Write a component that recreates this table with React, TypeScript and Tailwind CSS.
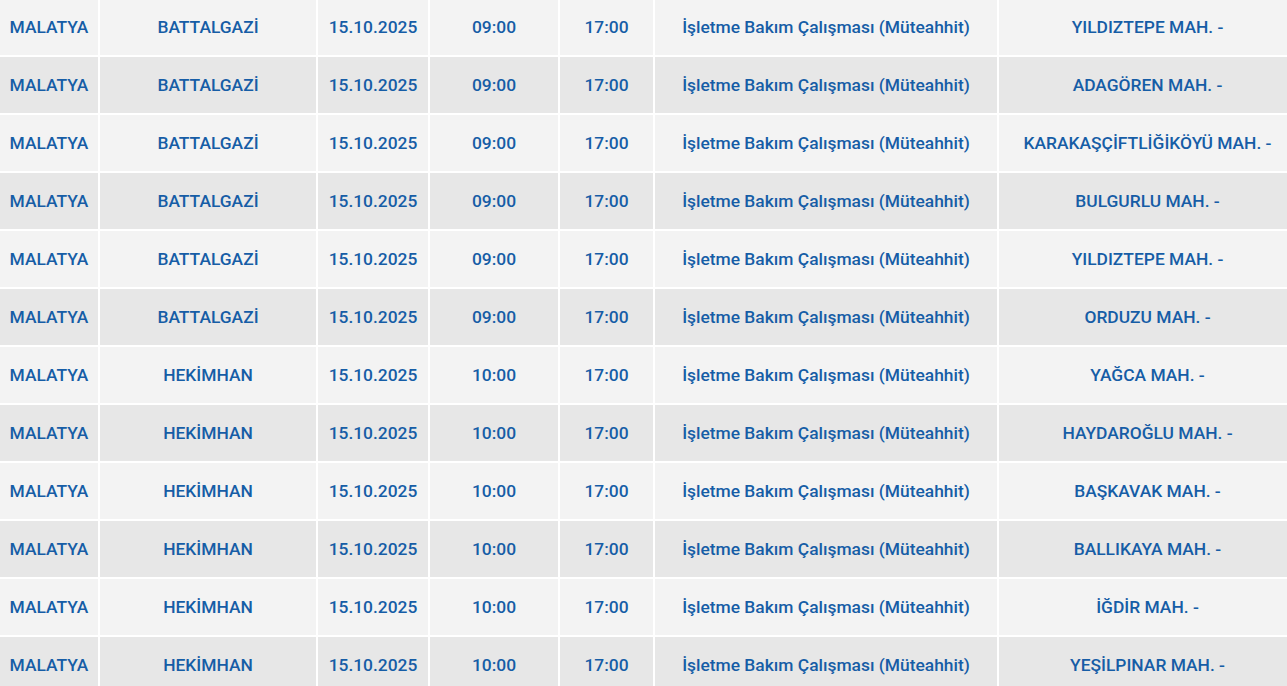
import React from "react";

const rows: [string, string, string][] = [
  ["BATTALGAZİ", "09:00", "YILDIZTEPE MAH. -"],
  ["BATTALGAZİ", "09:00", "ADAGÖREN MAH. -"],
  ["BATTALGAZİ", "09:00", "KARAKAŞÇİFTLİĞİKÖYÜ MAH. -"],
  ["BATTALGAZİ", "09:00", "BULGURLU MAH. -"],
  ["BATTALGAZİ", "09:00", "YILDIZTEPE MAH. -"],
  ["BATTALGAZİ", "09:00", "ORDUZU MAH. -"],
  ["HEKİMHAN", "10:00", "YAĞCA MAH. -"],
  ["HEKİMHAN", "10:00", "HAYDAROĞLU MAH. -"],
  ["HEKİMHAN", "10:00", "BAŞKAVAK MAH. -"],
  ["HEKİMHAN", "10:00", "BALLIKAYA MAH. -"],
  ["HEKİMHAN", "10:00", "İĞDİR MAH. -"],
  ["HEKİMHAN", "10:00", "YEŞİLPINAR MAH. -"],
];

export default function App() {
  return (
    <div className="w-[1287px] h-[686px] overflow-hidden bg-white">
      <div
        className="-mt-[1px] w-[1296px] grid grid-cols-[98px_216px_110px_128px_93px_342px_297px] gap-[2px] text-[17.4px] font-medium text-[#165da6]"
        style={{ fontFamily: "Roboto, 'Liberation Sans', sans-serif" }}
      >
        {rows.map((r, i) => {
          const bg = i % 2 === 0 ? "bg-[#f3f3f3]" : "bg-[#e7e7e7]";
          const cells = ["MALATYA", r[0], "15.10.2025", r[1], "17:00", "İşletme Bakım Çalışması (Müteahhit)", r[2]];
          return cells.map((c, j) => (
            <div key={`${i}-${j}`} className={`${bg} h-[56px] flex items-center justify-center whitespace-nowrap`}>
              {c}
            </div>
          ));
        })}
      </div>
    </div>
  );
}
